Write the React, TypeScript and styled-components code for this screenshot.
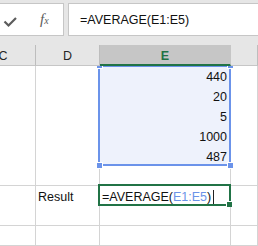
import styled, { createGlobalStyle } from 'styled-components';

const GlobalStyle = createGlobalStyle`
  html, body {
    margin: 0;
    padding: 0;
    background: #ffffff;
  }
  body {
    font-family: "Liberation Sans", Arial, sans-serif;
  }
`;

const COLS = '65px 64px 131px 1fr';

type Row = [string, string, string];

const rows: Row[] = [
  ['', '', '440'],
  ['', '', '20'],
  ['', '', '5'],
  ['', '', '1000'],
  ['', '', '487'],
  ['', '', ''],
  ['', 'Result', '=f'],
  ['', '', ''],
  ['', '', ''],
];

export default function App() {
  return (
    <Page>
      <GlobalStyle />
      <FormulaArea>
        <IconBox>
          <svg width="20" height="14" viewBox="0 0 20 14">
            <path d="M4.5 7.5 L8.5 11.5 L16 4" fill="none" stroke="#5c5c5c" strokeWidth="2.2" />
          </svg>
          <Fx>
            f<small>x</small>
          </Fx>
        </IconBox>
        <FormulaInput>=AVERAGE(E1:E5)</FormulaInput>
      </FormulaArea>

      <Header>
        <HeaderCell>C</HeaderCell>
        <HeaderCell>D</HeaderCell>
        <HeaderCell $selected>E</HeaderCell>
        <HeaderCell />
      </Header>

      <Body>
        {rows.map((r, i) => (
          <GridRow key={i}>
            <Cell>{r[0]}</Cell>
            <Cell>{r[1]}</Cell>
            <Cell $selected={i < 5} $right={i < 5}>
              {r[2] === '=f' ? (
                <>
                  =AVERAGE(<Ref>E1:E5</Ref>)<Caret />
                </>
              ) : (
                r[2]
              )}
            </Cell>
            <Cell />
          </GridRow>
        ))}

        <Selection />
        <Handle style={{ left: 97, top: -3 }} />
        <Handle style={{ left: 228, top: -3 }} />
        <Handle style={{ left: 97, top: 97 }} />
        <Handle style={{ left: 228, top: 97 }} />

        <ActiveCell>
          <FillHandle />
        </ActiveCell>
      </Body>
    </Page>
  );
}

const Page = styled.div`
  width: 258px;
  height: 246px;
  overflow: hidden;
  background: #ffffff;
`;

const FormulaArea = styled.div`
  height: 45px;
  background: #e6e6e6;
  display: flex;
  align-items: flex-start;
  padding-top: 3px;
  box-sizing: border-box;
  gap: 4px;
`;

const IconBox = styled.div`
  width: 64px;
  height: 33px;
  box-sizing: border-box;
  background: #ffffff;
  border: 1px solid #c6c6c6;
  border-left: none;
  display: flex;
  align-items: center;
  padding-left: 0;
  gap: 20px;
  svg {
    display: block;
    margin-top: 2px;
  }
`;

const Fx = styled.span`
  font-family: "Liberation Serif", "Times New Roman", serif;
  font-style: italic;
  font-size: 15px;
  color: #5c5c5c;
  small {
    font-size: 10px;
  }
`;

const FormulaInput = styled.div`
  flex: 1;
  height: 33px;
  box-sizing: border-box;
  background: #ffffff;
  border: 1px solid #c6c6c6;
  border-right: none;
  padding-left: 11px;
  display: flex;
  align-items: center;
  font-size: 12.5px;
  color: #111;
`;

const Header = styled.div`
  display: grid;
  grid-template-columns: ${COLS};
  margin-left: -29px;
  height: 21px;
  background: #e6e6e6;
`;

const HeaderCell = styled.div<{ $selected?: boolean }>`
  box-sizing: border-box;
  display: flex;
  align-items: center;
  justify-content: center;
  padding-top: 2px;
  font-size: 12.5px;
  color: ${(p) => (p.$selected ? '#217346' : '#262626')};
  font-weight: ${(p) => (p.$selected ? 'bold' : 'normal')};
  background: ${(p) => (p.$selected ? '#c6c6c6' : 'transparent')};
  border-right: 1px solid ${(p) => (p.$selected ? '#c6c6c6' : '#bdbdbd')};
  border-bottom: ${(p) => (p.$selected ? '2px solid #217346' : '1px solid #c6c6c6')};
  margin-top: ${(p) => (p.$selected ? '0' : '0')};
`;

const Body = styled.div`
  position: relative;
  overflow: hidden;
  height: 180px;
`;

const GridRow = styled.div`
  display: grid;
  grid-template-columns: ${COLS};
  margin-left: -29px;
  height: 20px;
`;

const Cell = styled.div<{ $selected?: boolean; $right?: boolean }>`
  box-sizing: border-box;
  border-right: 1px solid #d4d4d4;
  border-bottom: 1px solid #d4d4d4;
  background: ${(p) => (p.$selected ? '#eef2fc' : '#ffffff')};
  font-size: 12.5px;
  color: #111;
  line-height: 20px;
  padding: 1px 3px 0 2px;
  text-align: ${(p) => (p.$right ? 'right' : 'left')};
  white-space: nowrap;
  display: flex;
  align-items: center;
  justify-content: ${(p) => (p.$right ? 'flex-end' : 'flex-start')};
`;

const Ref = styled.span`
  color: #6b93e8;
`;

const Caret = styled.span`
  display: inline-block;
  width: 1px;
  height: 15px;
  margin-left: 2px;
  background: #222;
`;

const Selection = styled.div`
  position: absolute;
  left: 98px;
  top: -1px;
  width: 133px;
  height: 101px;
  box-sizing: border-box;
  border: 2px solid #6b93ea;
  pointer-events: none;
`;

const Handle = styled.div`
  position: absolute;
  width: 5px;
  height: 5px;
  background: #6b93ea;
  box-shadow: 0 0 0 1px #ffffff;
`;

const ActiveCell = styled.div`
  position: absolute;
  left: 98px;
  top: 118px;
  width: 133px;
  height: 22px;
  box-sizing: border-box;
  border: 2px solid #217346;
`;

const FillHandle = styled.div`
  position: absolute;
  right: -3px;
  bottom: -3px;
  width: 5px;
  height: 5px;
  background: #217346;
  box-shadow: -1px -1px 0 0 #ffffff;
`;
